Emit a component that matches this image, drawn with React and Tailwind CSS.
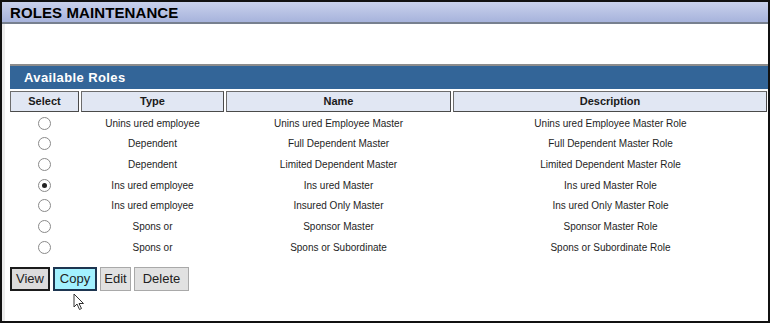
import React from "react";

const roles = [
  { type: "Unins ured employee", name: "Unins ured Employee Master", desc: "Unins ured Employee Master Role" },
  { type: "Dependent", name: "Full Dependent Master", desc: "Full Dependent Master Role" },
  { type: "Dependent", name: "Limited Dependent Master", desc: "Limited Dependent Master Role" },
  { type: "Ins ured employee", name: "Ins ured Master", desc: "Ins ured Master Role", checked: true },
  { type: "Ins ured employee", name: "Insured Only Master", desc: "Ins ured Only Master Role" },
  { type: "Spons or", name: "Sponsor Master", desc: "Sponsor Master Role" },
  { type: "Spons or", name: "Spons or Subordinate", desc: "Spons or Subordinate Role" },
];

const cols = "grid grid-cols-[69px_143px_225px_1fr] gap-x-[2px]";

const Radio = ({ checked }) => (
  <span className="w-[13px] h-[13px] rounded-full border border-[#8a8a8a] bg-white flex items-center justify-center">
    {checked && <span className="w-[5px] h-[5px] rounded-full bg-[#222]" />}
  </span>
);

const Cursor = () => (
  <svg width="12" height="18" viewBox="0 0 12 18" className="absolute left-[71px] top-[291px]">
    <path
      d="M1 1 L1 14 L4 11 L6.5 16.5 L8.5 15.5 L6 10.5 L10.5 10.5 Z"
      fill="#fff"
      stroke="#333"
      strokeWidth="1"
      strokeLinejoin="round"
    />
  </svg>
);

export default function App() {
  return (
    <div
      className="relative w-[770px] h-[323px] border-2 border-[#111] bg-white flex flex-col overflow-hidden"
      style={{ fontFamily: '"Liberation Sans", Arial, sans-serif' }}
    >
      {/* Title bar */}
      <div className="h-[22px] bg-gradient-to-b from-[#c9d1ec] to-[#a7b3dc] border-b-2 border-[#77808f] flex items-center pl-[8px]">
        <span className="text-[15px] font-bold text-black tracking-[0.1px] leading-none">
          ROLES MAINTENANCE
        </span>
      </div>

      <div className="flex-1 flex border-l-[3px] border-[#ececec]">
        <div className="flex-1 pl-[5px] pt-[40px] flex flex-col">
          {/* Section header */}
          <div className="h-[25px] bg-[#336598] border-t-2 border-[#8c8c8c] flex items-center pl-[14px]">
            <span className="text-[13px] font-bold text-white tracking-[0.4px]">Available Roles</span>
          </div>

          {/* Column headers */}
          <div className={`${cols} mt-[2px] pr-[1px]`}>
            {["Select", "Type", "Name", "Description"].map((h) => (
              <div
                key={h}
                className="h-[21px] bg-[#e1e7f3] border border-[#6c6c6c] border-r-[#4a4a4a] border-b-[#4a4a4a] flex items-center justify-center text-[11px] font-bold text-[#1a1a1a]"
              >
                {h}
              </div>
            ))}
          </div>

          {/* Rows */}
          <div className="mt-[1px]">
            {roles.map((r, i) => (
              <div key={i} className={`${cols} h-[20.67px] items-center text-[10px] text-[#1e1e1e]`}>
                <div className="flex justify-center">
                  <Radio checked={r.checked} />
                </div>
                <div className="text-center">{r.type}</div>
                <div className="text-center">{r.name}</div>
                <div className="text-center">{r.desc}</div>
              </div>
            ))}
          </div>

          {/* Buttons */}
          <div className="mt-[9px] flex items-start gap-[3px] text-[13px] text-[#222]">
            <button className="h-[24px] w-[40px] bg-[#dcdcdc] border-2 border-[#1b1b1b]">View</button>
            <button className="h-[24px] w-[44px] bg-[#a3f1ff] border-2 border-[#1d3550]">Copy</button>
            <button className="h-[24px] w-[31px] bg-[#e1e1e1] border border-[#a9a9a9]">Edit</button>
            <button className="h-[24px] w-[55px] bg-[#e1e1e1] border border-[#a9a9a9]">Delete</button>
          </div>
        </div>
      </div>
      <Cursor />
    </div>
  );
}
